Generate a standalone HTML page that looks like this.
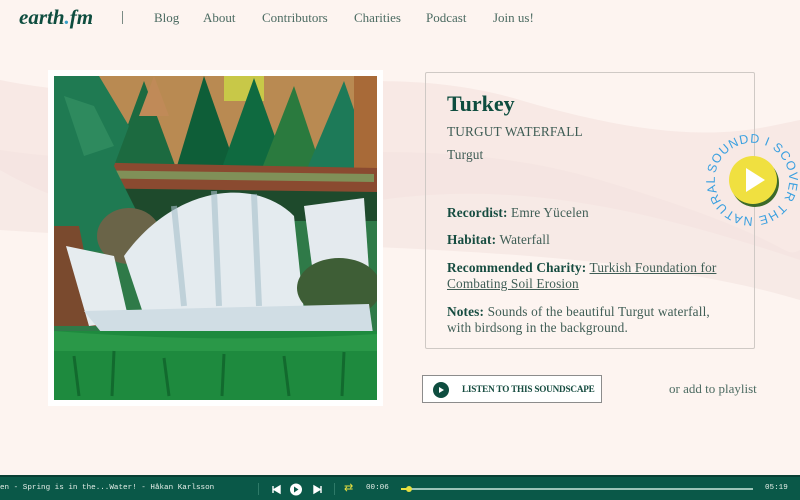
<!DOCTYPE html>
<html><head><meta charset="utf-8"><style>
*{margin:0;padding:0;box-sizing:border-box}
body{width:800px;height:500px;overflow:hidden;background:#fdf4f0;font-family:"Liberation Serif",serif;color:#2f4f46;position:relative}
.nav{position:absolute;top:0;left:0;width:800px;height:40px}
.logo{position:absolute;left:19px;top:5px;font-size:21px;font-weight:bold;font-style:italic;color:#0e4d3f}
.logo span{color:#3aa0c8}
.sep{position:absolute;left:122px;top:11px;width:1px;height:13px;background:#7a8a84}
.nav a{position:absolute;top:10px;font-size:13px;color:#4c6b62;text-decoration:none}
.wave{position:absolute;left:0;top:60px}
.frame{position:absolute;left:48px;top:70px;width:335px;height:336px;background:#fff}
.card{position:absolute;left:425px;top:72px;width:330px;height:277px;border:1px solid #cfc9c5;border-radius:2px}
.card h1{position:absolute;left:21px;top:18px;font-size:22px;color:#0e4d3f}
.card p{position:absolute;left:21px;font-size:13.3px;color:#3f5d55;line-height:16px;width:280px;letter-spacing:0.15px}
.card b{color:#164c40}
.card u{color:#3f5d55}
.btn{position:absolute;left:422px;top:375px;width:180px;height:28px;border:1px solid #8c8c8c;background:#fff;font-size:9.2px;font-weight:bold;color:#164c40;padding:8px 0 0 39px;white-space:nowrap;letter-spacing:-0.2px}
.btn i{position:absolute;left:10px;top:6px;width:16px;height:16px;border-radius:50%;background:#0e4d3f}
.btn i:after{content:"";position:absolute;left:6px;top:4.5px;border-left:5px solid #fff;border-top:3.5px solid transparent;border-bottom:3.5px solid transparent}
.pl{position:absolute;left:669px;top:381px;font-size:13px;color:#4c6b62}
.bar{position:absolute;left:0;top:475px;width:800px;height:25px;background:#0a5848;border-top:2px solid #083f34;font-family:"Liberation Mono",monospace;font-size:7.6px;color:#e6efe9}
</style></head><body>
<svg class="wave" width="800" height="260" viewBox="0 0 800 260"><path d="M0 20 C200 60 350 -10 520 40 S750 70 800 60 V200 C650 150 520 120 380 140 S120 180 0 110Z" fill="#f6e6e2" opacity=".8"/><path d="M0 90 C200 120 400 60 600 120 S780 200 800 190 V240 C600 180 300 190 0 170Z" fill="#f4e3df" opacity=".6"/></svg>
<div class="nav">
<div class="logo">earth<span>.</span>fm</div>
<div class="sep"></div>
<a style="left:154px">Blog</a><a style="left:203px">About</a><a style="left:262px">Contributors</a><a style="left:354px">Charities</a><a style="left:426px">Podcast</a><a style="left:493px">Join us!</a>
</div>
<div class="frame"></div>
<svg style="position:absolute;left:54px;top:76px" width="323" height="324" viewBox="0 0 323 324">
<rect width="323" height="324" fill="#2f7a48"/>
<rect width="323" height="100" fill="#b98a52"/>
<rect x="170" y="0" width="40" height="25" fill="#c8c848"/>
<polygon points="55,100 90,5 125,100" fill="#1c6a40"/>
<polygon points="85,40 100,0 115,40" fill="#c08a58"/>
<polygon points="120,100 150,0 185,100" fill="#0e5e38"/>
<polygon points="165,100 200,2 235,100" fill="#0f6a40"/>
<polygon points="205,100 240,10 270,100" fill="#2a7a3e"/>
<polygon points="250,100 290,5 323,100" fill="#1d7a58"/>
<rect x="300" y="0" width="23" height="100" fill="#a86a38"/>
<rect x="0" y="100" width="323" height="45" fill="#1e4a2c"/>
<path d="M15 86 L323 92 L323 116 L15 112Z" fill="#8a4a30"/>
<path d="M20 94 L320 98 L320 106 L20 102Z" fill="#7cae6a" opacity=".7"/>
<path d="M0 0 L45 0 L75 50 L60 90 L85 140 L70 175 L0 175Z" fill="#1f7a52"/>
<path d="M10 20 L40 30 L60 70 L30 80Z" fill="#2e8a5e"/>
<path d="M0 150 L25 150 L45 250 L0 250Z" fill="#7a4a2e"/>
<ellipse cx="75" cy="160" rx="32" ry="28" fill="#6a6448"/>
<path d="M70 180 C120 110 200 100 240 140 L250 235 L90 240 Z" fill="#e4ebef"/>
<path d="M120 130 L130 230 M160 115 L165 230 M200 118 L205 230" stroke="#a8c0cc" stroke-width="6" opacity=".6"/>
<path d="M250 130 L310 122 L315 195 L260 205Z" fill="#e4eaee"/>
<path d="M12 170 L60 180 L75 245 L35 250Z" fill="#e6ecef"/>
<ellipse cx="285" cy="212" rx="42" ry="30" fill="#3e5e36"/>
<path d="M30 235 L315 228 L320 265 L60 272Z" fill="#d0dde4"/>
<rect x="0" y="255" width="323" height="69" fill="#1e8a3e"/>
<path d="M0 255 Q160 268 323 258 V275 H0Z" fill="#2a9848"/>
<path d="M20 280 L25 320 M60 275 L58 320 M110 282 L115 320 M170 278 L168 320 M230 280 L235 320 M290 276 L288 320" stroke="#126a2e" stroke-width="3"/>
</svg>
<div class="card">
<h1>Turkey</h1>
<p style="top:51px">TURGUT WATERFALL</p>
<p style="top:74px">Turgut</p>
<p style="top:132px"><b>Recordist:</b> Emre Yücelen</p>
<p style="top:159px"><b>Habitat:</b> Waterfall</p>
<p style="top:187px"><b>Recommended Charity:</b> <u>Turkish Foundation for Combating Soil Erosion</u></p>
<p style="top:231px"><b>Notes:</b> Sounds of the beautiful Turgut waterfall, with birdsong in the background.</p>
</div>
<svg style="position:absolute;left:700px;top:128px" width="104" height="104" viewBox="0 0 104 104">
<defs><path id="c" d="M15.4 45.5 A37 37 0 1 1 88.6 58.5 A37 37 0 1 1 15.4 45.5"/></defs>
<circle cx="55" cy="55" r="24" fill="#3c6a2a"/>
<circle cx="53" cy="52" r="24" fill="#f0e040"/>
<polygon points="46,40 46,64 65,52" fill="#fff"/>
<text font-family="Liberation Sans,sans-serif" font-size="12.5" fill="#3aa0e0" letter-spacing="0.9"><textPath href="#c">SOUNDD I SCOVER  THE  NATURAL</textPath></text>
</svg>
<div class="btn"><i></i>LISTEN TO THIS SOUNDSCAPE</div>
<div class="pl">or add to playlist</div>
<div class="bar">
<span style="position:absolute;left:0;top:7px">en - Spring is in the...Water! - Håkan Karlsson</span>
<div style="position:absolute;left:258px;top:6px;width:1px;height:12px;background:#2e7a68"></div>
<svg style="position:absolute;left:270px;top:5px" width="60" height="15"><path d="M3 4v7M10 4v7L4 7.5Z" fill="#fff" stroke="#fff" stroke-width="1.4"/><circle cx="26" cy="7.5" r="6" fill="#fff"/><path d="M24 4.5v6l4.5-3Z" fill="#0a5848"/><path d="M44 4v7L50 7.5ZM51 4v7" fill="#fff" stroke="#fff" stroke-width="1.4"/></svg>
<div style="position:absolute;left:334px;top:6px;width:1px;height:12px;background:#2e7a68"></div>
<span style="position:absolute;left:344px;top:4px;color:#e8e040;font-size:11px">⇄</span>
<span style="position:absolute;left:366px;top:7px">00:06</span>
<div style="position:absolute;left:401px;top:11px;width:352px;height:2px;background:#9cc4b8"></div>
<div style="position:absolute;left:401px;top:11px;width:9px;height:2px;background:#e8e040"></div>
<div style="position:absolute;left:406px;top:9px;width:6px;height:6px;border-radius:50%;background:#e8e040"></div>
<span style="position:absolute;left:765px;top:7px">05:19</span>
</div>
</body></html>
